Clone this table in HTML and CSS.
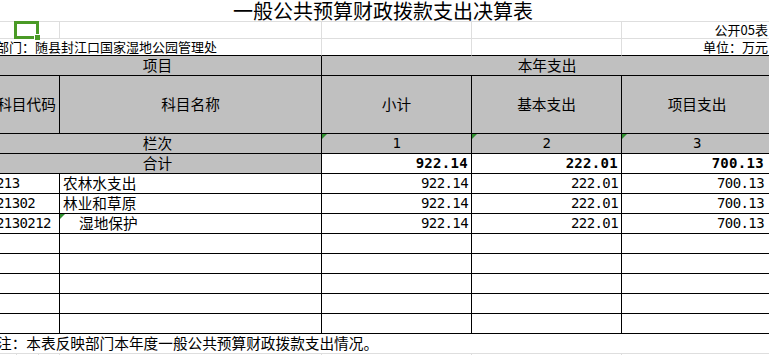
FILE: index.html
```html
<!DOCTYPE html>
<html lang="zh-CN">
<head>
<meta charset="utf-8">
<title>一般公共预算财政拨款支出决算表</title>
<link rel="stylesheet" href="styles.css">
</head>
<body>
<div class="viewport">
  <div class="sheet">
    <div class="c title span5 gb">一般公共预算财政拨款支出决算表</div>

    <div class="c gb gr"></div>
    <div class="c gb gr"></div>
    <div class="c gb gr"></div>
    <div class="c gb gr"></div>
    <div class="c gb rt small pr4">公开05表</div>

    <div class="c span2 bb gr small lt pl2">部门：随县封江口国家湿地公园管理处</div>
    <div class="c bb gr"></div>
    <div class="c bb gr"></div>
    <div class="c bb rt small pr4">单位：万元</div>

    <div class="c span2 hd bb br">项目</div>
    <div class="c span3 hd bb">本年支出</div>

    <div class="c hd bb br">科目代码</div>
    <div class="c hd bb br">科目名称</div>
    <div class="c hd bb br">小计</div>
    <div class="c hd bb br">基本支出</div>
    <div class="c hd bb">项目支出</div>

    <div class="c span2 hd bb br">栏次</div>
    <div class="c hd bb br num tri">1</div>
    <div class="c hd bb br num tri">2</div>
    <div class="c hd bb num tri">3</div>

    <div class="c span2 hd bb br">合计</div>
    <div class="c bb br num bold rt pr3">922.14</div>
    <div class="c bb br num bold rt pr3">222.01</div>
    <div class="c bb num bold rt pr8">700.13</div>

    <div class="c bb br num lt pl2">213</div>
    <div class="c bb br lt pl3">农林水支出</div>
    <div class="c bb br num rt pr3">922.14</div>
    <div class="c bb br num rt pr3">222.01</div>
    <div class="c bb num rt pr8">700.13</div>

    <div class="c bb br num lt pl2">21302</div>
    <div class="c bb br lt pl3">林业和草原</div>
    <div class="c bb br num rt pr3">922.14</div>
    <div class="c bb br num rt pr3">222.01</div>
    <div class="c bb num rt pr8">700.13</div>

    <div class="c bb br num lt pl2">2130212</div>
    <div class="c bb br lt pl19 tri">湿地保护</div>
    <div class="c bb br num rt pr3">922.14</div>
    <div class="c bb br num rt pr3">222.01</div>
    <div class="c bb num rt pr8">700.13</div>

    <div class="c bb br"></div><div class="c bb br"></div><div class="c bb br"></div><div class="c bb br"></div><div class="c bb"></div>
    <div class="c bb br"></div><div class="c bb br"></div><div class="c bb br"></div><div class="c bb br"></div><div class="c bb"></div>
    <div class="c bb br"></div><div class="c bb br"></div><div class="c bb br"></div><div class="c bb br"></div><div class="c bb"></div>
    <div class="c bb br"></div><div class="c bb br"></div><div class="c bb br"></div><div class="c bb br"></div><div class="c bb"></div>
    <div class="c bb br"></div><div class="c bb br"></div><div class="c bb br"></div><div class="c bb br"></div><div class="c bb"></div>

    <div class="c span5 gb lt pl3">注：本表反映部门本年度一般公共预算财政拨款支出情况。</div>

    <div class="tail span5">
      <span class="t1"></span><span class="t2"></span><span class="t3"></span><span class="t4"></span><span class="t5"></span><span class="t5"></span><span class="t6"></span>
    </div>
  </div>
  <div class="selection"><span class="handle"></span></div>
</div>
</body>
</html>
```
FILE: styles.css
```css
html, body {
  margin: 0;
  padding: 0;
  background: #ffffff;
}
body {
  width: 769px;
  height: 355px;
  overflow: hidden;
}
.viewport {
  position: relative;
  width: 769px;
  height: 355px;
  overflow: hidden;
}
.sheet {
  margin-left: -6px;
  width: 778px;
  display: grid;
  grid-template-columns: 66px 262px 150px 150px 150px;
  grid-template-rows: 22px 17px 17px 20px 58px 20px 20px 20px 20px 20px 20px 20px 20px 20px 20px 20px 1px;
  font-family: "Noto Sans CJK SC", "Noto Sans", sans-serif;
  font-size: 14.67px;
  color: #000000;
}
.c {
  box-sizing: border-box;
  display: flex;
  align-items: center;
  justify-content: center;
  white-space: nowrap;
  overflow: visible;
  position: relative;
  line-height: 1.15;
}
.span2 { grid-column: span 2; }
.span3 { grid-column: span 3; }
.span5 { grid-column: span 5; }
.title {
  font-size: 20px;
  line-height: 1.05;
}
.small { font-size: 13px; }
.hd { background: #c0c0c0; }
.bb { border-bottom: 1px solid #000000; }
.br { border-right: 1px solid #000000; }
.gb { border-bottom: 1px solid #dedede; }
.gr { border-right: 1px solid #dedede; }
.lt { justify-content: flex-start; }
.rt { justify-content: flex-end; }
.pl2 { padding-left: 2px; }
.pl3 { padding-left: 3px; }
.pl19 { padding-left: 19px; }
.pr3 { padding-right: 3px; }
.pr4 { padding-right: 4px; }
.pr8 { padding-right: 8px; }
.num {
  font-family: "DejaVu Sans Mono", "Liberation Mono", monospace;
  font-size: 14px;
  letter-spacing: -0.6px;
}
.num.bold {
  font-weight: bold;
  letter-spacing: 0.3px;
}
.tri::before {
  content: "";
  position: absolute;
  left: 0;
  top: 0;
  width: 0;
  height: 0;
  border-top: 5px solid #2f8f2f;
  border-right: 5px solid transparent;
}
.tail {
  display: flex;
  height: 1px;
}
.tail span {
  box-sizing: border-box;
  height: 100%;
  border-right: 1px solid #dedede;
}
.t1 { width: 23px; }
.t2 { width: 22px; }
.t3 { width: 21px; }
.t4 { width: 262px; }
.t5 { width: 150px; }
.t6 { width: 150px; border-right: none !important; }
.selection {
  position: absolute;
  left: 14px;
  top: 21px;
  width: 25px;
  height: 18px;
  box-sizing: border-box;
  border: 3px solid #4a9a26;
}
.handle {
  position: absolute;
  right: -4px;
  bottom: -4px;
  width: 6px;
  height: 6px;
  box-sizing: border-box;
  background: #4a9a26;
  border-top: 1px solid #ffffff;
  border-left: 1px solid #ffffff;
}
```
